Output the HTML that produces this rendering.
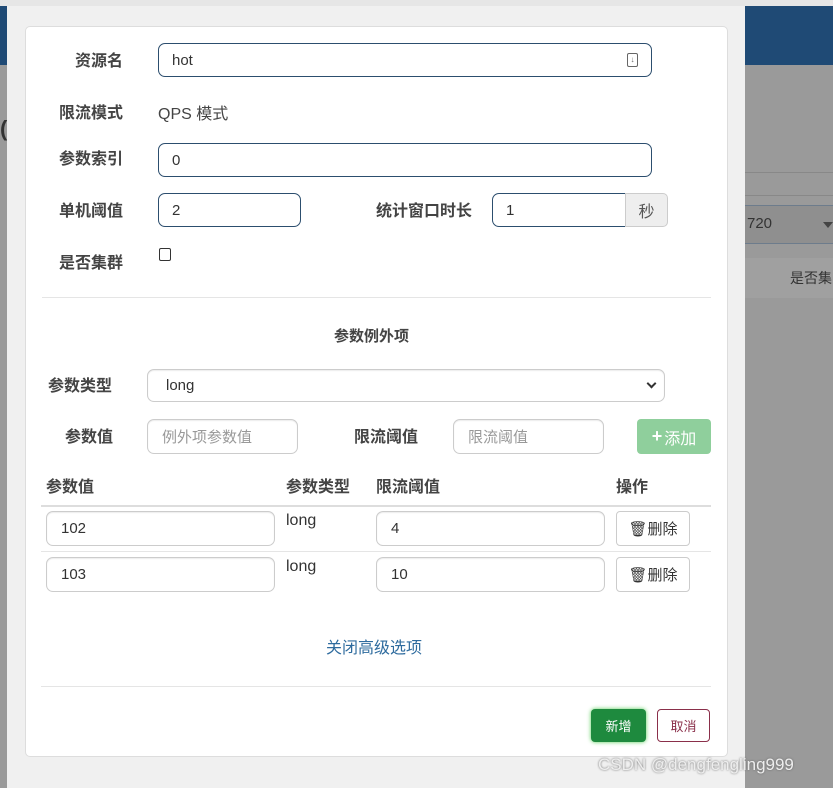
<!DOCTYPE html>
<html><head><meta charset="utf-8"><style>
*{box-sizing:border-box;margin:0;padding:0}
body{width:833px;height:788px;overflow:hidden;background:#9a9a9a;font-family:"Liberation Sans","Noto Sans CJK SC",sans-serif;font-size:15px;color:#333;position:relative}
.a{position:absolute}
.lbl{position:absolute;font-weight:bold;color:#444;font-size:16px;margin-top:-5px}
.in{position:absolute;border:1px solid #2c4e6e;border-radius:7px;background:#fff;padding-left:13px;font-size:15px;display:flex;align-items:center;color:#333}
.in2{position:absolute;border:1px solid #ccc;border-radius:7px;background:#fff;padding-left:14px;font-size:15px;display:flex;align-items:center;color:#333;box-shadow:inset 0 1px 1px rgba(0,0,0,.08)}
.hr{position:absolute;height:1px;background:#e5e5e5}
.del{position:absolute;border:1px solid #ccc;border-radius:4px;background:#fff;font-size:15px;display:flex;align-items:center;justify-content:center;color:#333}
</style></head><body>
<div class="a" style="left:0;top:0;width:833px;height:6px;background:#e6e6e6"></div>
<div class="a" style="left:0;top:6px;width:833px;height:59px;background:#1f4a75"></div>
<div class="a" style="left:745px;top:172px;width:88px;height:1px;background:#888"></div>
<div class="a" style="left:745px;top:195px;width:88px;height:1px;background:#888"></div>
<div class="a" style="left:745px;top:205px;width:88px;height:39px;background:#8f8f8f;border-top:1px solid #6d7c8c;border-bottom:1px solid #6d7c8c"></div>
<div class="a" style="left:747px;top:215px;font-size:15px;color:#333">720</div>
<div class="a" style="left:823px;top:222px;border:5px solid transparent;border-top:6px solid #444"></div>
<div class="a" style="left:745px;top:258px;width:88px;height:40px;background:#a0a0a0"></div>
<div class="a" style="left:790px;top:268px;font-size:14px;color:#333">是否集</div>
<div class="a" style="left:0;top:116px;font-size:22px;font-weight:bold;color:#333">(</div>
<div class="a" style="left:7px;top:6px;width:738px;height:782px;background:#f0f0f0"></div>
<div class="a" style="left:25px;top:26px;width:703px;height:731px;background:#fff;border:1px solid #ddd;border-radius:5px"></div>

<div class="lbl" style="left:75px;top:52px">资源名</div>
<div class="in" style="left:158px;top:43px;width:494px;height:34px">hot</div>
<div class="a" style="left:627px;top:53px;width:11px;height:14px;border:1px solid #666;border-radius:2px;font-size:8px;text-align:center;line-height:12px;color:#666">↓</div>
<div class="lbl" style="left:59px;top:104px">限流模式</div>
<div class="a" style="left:158px;top:100px;font-size:16px;color:#444">QPS 模式</div>
<div class="lbl" style="left:59px;top:150px">参数索引</div>
<div class="in" style="left:158px;top:143px;width:494px;height:34px">0</div>
<div class="lbl" style="left:59px;top:202px">单机阈值</div>
<div class="in" style="left:158px;top:193px;width:143px;height:34px">2</div>
<div class="lbl" style="left:376px;top:202px">统计窗口时长</div>
<div class="in" style="left:492px;top:193px;width:134px;height:34px;border-radius:7px 0 0 7px">1</div>
<div class="a" style="left:625px;top:193px;width:43px;height:34px;background:#eee;border:1px solid #ccc;border-radius:0 5px 5px 0;display:flex;align-items:center;justify-content:center;font-size:16px;color:#555">秒</div>
<div class="lbl" style="left:59px;top:254px">是否集群</div>
<div class="a" style="left:159px;top:248px;width:12px;height:13px;border:1px solid #333;border-radius:2px"></div>
<div class="hr" style="left:42px;top:297px;width:669px"></div>

<div class="lbl" style="left:334px;top:330px;font-size:15px">参数例外项</div>
<div class="lbl" style="left:48px;top:377px">参数类型</div>
<div class="in2" style="left:147px;top:369px;width:518px;height:33px;padding-left:18px">long</div>
<div class="a" style="left:648px;top:380px;width:7px;height:7px;border-right:2px solid #333;border-bottom:2px solid #333;transform:rotate(45deg)"></div>
<div class="lbl" style="left:65px;top:428px">参数值</div>
<div class="in2" style="left:147px;top:419px;width:151px;height:35px;color:#999">例外项参数值</div>
<div class="lbl" style="left:354px;top:428px">限流阈值</div>
<div class="in2" style="left:453px;top:419px;width:151px;height:35px;color:#999">限流阈值</div>
<div class="a" style="left:637px;top:419px;width:74px;height:35px;background:#8fcf9c;border-radius:4px;color:#fff;font-size:16px;display:flex;align-items:center;justify-content:center"><b style="font-size:18px;margin-right:2px">+</b>添加</div>

<div class="lbl" style="left:46px;top:478px">参数值</div>
<div class="lbl" style="left:286px;top:478px">参数类型</div>
<div class="lbl" style="left:376px;top:478px">限流阈值</div>
<div class="lbl" style="left:616px;top:478px">操作</div>
<div class="a" style="left:41px;top:505px;width:670px;height:2px;background:#ddd"></div>
<div class="in2" style="left:46px;top:511px;width:229px;height:35px">102</div>
<div class="a" style="left:286px;top:512px;font-size:16px">long</div>
<div class="in2" style="left:376px;top:511px;width:229px;height:35px">4</div>
<div class="del" style="left:616px;top:511px;width:74px;height:35px">🗑删除</div>
<div class="hr" style="left:41px;top:551px;width:670px"></div>
<div class="in2" style="left:46px;top:557px;width:229px;height:35px">103</div>
<div class="a" style="left:286px;top:558px;font-size:16px">long</div>
<div class="in2" style="left:376px;top:557px;width:229px;height:35px">10</div>
<div class="del" style="left:616px;top:557px;width:74px;height:35px">🗑删除</div>

<div class="a" style="left:326px;top:634px;font-size:16px;color:#2e6b9e">关闭高级选项</div>
<div class="hr" style="left:41px;top:686px;width:670px"></div>
<div class="a" style="left:591px;top:709px;width:55px;height:33px;background:#1e8a3e;border-radius:4px;color:#fff;font-size:13px;display:flex;align-items:center;justify-content:center;box-shadow:0 0 4px #5c5">新增</div>
<div class="a" style="left:657px;top:709px;width:53px;height:33px;border:1px solid #8a2f4a;border-radius:4px;background:#fff;color:#8a2f4a;font-size:13px;display:flex;align-items:center;justify-content:center">取消</div>
<div class="a" style="left:598px;top:755px;font-size:17px;color:#eee;text-shadow:0 0 2px #666">CSDN @dengfengling999</div>
</body></html>
